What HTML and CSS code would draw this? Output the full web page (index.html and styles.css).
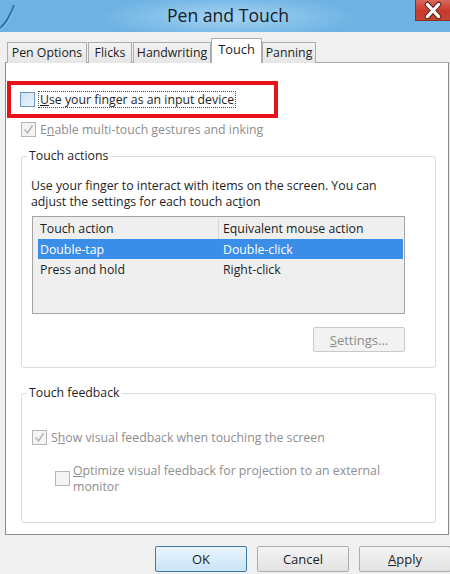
FILE: index.html
```html
<!DOCTYPE html>
<html>
<head>
<meta charset="utf-8">
<link rel="stylesheet" href="styles.css">
</head>
<body>
<div class="window">
  <div class="titlebar">
    <svg class="app-icon" width="30" height="32" viewBox="0 0 30 32"><path d="M0 28 C5 24 10 16 14 5" stroke="#2e6a97" stroke-width="1.6" fill="none"/><path d="M1 30 C6 26 10 20 13 12" stroke="#8cc1e6" stroke-width="1" fill="none"/></svg>
    <div class="title">Pen and Touch</div>
    <div class="close"><svg width="36" height="21" viewBox="0 0 36 21"><path d="M12 4 L24 17 M24 4 L12 17" stroke="#5a1a14" stroke-width="5.5" stroke-linecap="round"/><path d="M12 4 L24 17 M24 4 L12 17" stroke="#ffffff" stroke-width="3.4" stroke-linecap="round"/></svg></div>
  </div>

  <div class="tabs">
    <div class="tab t-pen">Pen Options</div>
    <div class="tab t-flicks">Flicks</div>
    <div class="tab t-hand">Handwriting</div>
    <div class="tab active">Touch</div>
    <div class="tab t-pan">Panning</div>
  </div>

  <div class="panel">
    <div class="highlight">
      <div class="check-row">
        <span class="box focus-box"></span>
        <span class="label focused"><u>U</u>se your finger as an input device</span>
      </div>
    </div>
    <div class="check-row row-enable disabled">
      <span class="box checked"><svg width="13" height="13" viewBox="0 0 13 13"><path d="M2.5 6.5 L5.5 10 L10.5 2.5" stroke="#b5b5b5" stroke-width="1.6" fill="none"/></svg></span>
      <span class="label">E<u>n</u>able multi-touch gestures and inking</span>
    </div>

    <fieldset class="group group-actions">
      <legend>Touch actions</legend>
      <p class="intro">Use your finger to interact with items on the screen. You can<br>adjust the settings for each touch ac<u>t</u>ion</p>
      <div class="list">
        <div class="list-row header"><span class="c1">Touch action</span><span class="c2">Equivalent mouse action</span></div>
        <div class="list-row selected"><span class="c1">Double-tap</span><span class="c2">Double-click</span></div>
        <div class="list-row"><span class="c1">Press and hold</span><span class="c2">Right-click</span></div>
      </div>
      <div class="settings-wrap"><div class="btn btn-disabled"><u>S</u>ettings...</div></div>
    </fieldset>

    <fieldset class="group group-feedback">
      <legend>Touch feedback</legend>
      <div class="check-row disabled row-show">
        <span class="box checked"><svg width="13" height="13" viewBox="0 0 13 13"><path d="M2.5 6.5 L5.5 10 L10.5 2.5" stroke="#b5b5b5" stroke-width="1.6" fill="none"/></svg></span>
        <span class="label">S<u>h</u>ow visual feedback when touching the screen</span>
      </div>
      <div class="check-row disabled row-opt">
        <span class="box"></span>
        <span class="label"><u>O</u>ptimize visual feedback for projection to an external<br>monitor</span>
      </div>
    </fieldset>
  </div>

  <div class="buttons">
    <div class="btn btn-default">OK</div>
    <div class="btn">Cancel</div>
    <div class="btn"><u>A</u>pply</div>
  </div>
</div>
</body>
</html>
```

FILE: styles.css
```css
* { box-sizing: border-box; }
html, body { margin: 0; padding: 0; }
body {
  width: 450px;
  height: 574px;
  overflow: hidden;
  background: #f0f0f0;
  font-family: "Open Sans", "Noto Sans", sans-serif;
  font-size: 12.3px;
  color: #1e1e1e;
}
.window { width: 450px; height: 574px; }

.titlebar {
  height: 32px;
  display: grid;
  grid-template-columns: 1fr auto 1fr;
  align-items: center;
  background: radial-gradient(ellipse 130px 22px at 228px 17px, #a6d3f2 0%, #86c1ea 55%, #6db2e3 100%);
}
.app-icon { justify-self: start; }
.title {
  font-size: 17.6px;
  color: #15202a;
  padding-left: 6px;
  margin-top: -2px;
}
.close {
  justify-self: end;
  align-self: start;
  width: 35px;
  height: 21px;
  background: linear-gradient(#d96a5c, #c7392b 55%, #c24536);
  border-left: 1px solid #8f2d22;
  border-bottom: 1px solid #8f2d22;
  display: flex;
  align-items: center;
  justify-content: center;
}
.close svg { display: block; }

.tabs {
  display: flex;
  padding-left: 7px;
  padding-top: 7px;
  height: 31px;
  align-items: flex-end;
  position: relative;
  z-index: 1;
  margin-bottom: -1px;
}
.tab {
  height: 21px;
  margin-right: 1px;
  border: 1px solid #acacac;
  border-bottom: none;
  background: linear-gradient(#f2f2f2, #e6e6e6);
  line-height: 20px;
  white-space: nowrap;
  text-align: center;
}
.t-pen { width: 80px; }
.t-flicks { width: 44px; }
.t-hand { width: 78px; }
.t-pan { width: 54px; }
.tab.active {
  width: 51px;
  height: 25px;
  background: #ffffff;
  line-height: 21px;
  margin-left: -1px;
  margin-right: 0;
  font-size: 12.8px;
}

.panel {
  margin-left: 5px;
  margin-right: 1px;
  height: 473px;
  background: #ffffff;
  border: 1px solid #8c8c8c;
  border-top-color: #a9a9a9;
  padding: 18px 0 0 1px;
}

.highlight {
  width: 271px;
  height: 37px;
  border: 4px solid #e8131a;
  padding-left: 9px;
  display: flex;
  align-items: center;
}
.check-row {
  display: flex;
  align-items: center;
  gap: 4px;
  white-space: nowrap;
}
.box {
  width: 15px;
  height: 15px;
  border: 1px solid #b5b5b5;
  background: #f4f4f4;
  display: inline-flex;
  align-items: center;
  justify-content: center;
  flex: none;
}
.focus-box {
  border-color: #6f97c0;
  background: linear-gradient(135deg, #cfe3f5, #e9f3fc);
}
.label.focused {
  outline: 1px dotted #444;
  outline-offset: 0;
  padding: 0 1px;
  line-height: 15px;
}
.disabled .label { color: #8e8e8e; }
.row-enable { margin-left: 14px; margin-top: 3px; }

.group {
  margin: 0 0 0 14px;
  width: 415px;
  border: 1px solid #dcdcdc;
  border-radius: 3px;
  padding: 0;
  min-width: 0;
}
.group legend {
  padding: 0 2px 0 2px;
  margin-left: 5px;
  line-height: 16px;
  color: #1e1e1e;
}
.group-actions { margin-top: 10px; height: 220px; }
.group-feedback { margin-top: 17px; height: 138px; }

.intro {
  margin: 14px 0 0 9px;
  line-height: 16px;
}
.list {
  margin: 6px 0 0 10px;
  width: 373px;
  height: 98px;
  border: 1px solid #a3a3a3;
  background: #efefef;
  padding: 1px 0 0 5px;
}
.list-row {
  display: flex;
  height: 20px;
  align-items: center;
}
.list-row .c1 { width: 181px; padding-left: 2px; }
.list-row .c2 { padding-left: 4px; }
.list-row.header { height: 21px; }
.list-row.header .c1 { border-right: 1px solid #d8d8d8; height: 21px; line-height: 21px; }
.list-row.selected {
  background: #3a8ee8;
  color: #ffffff;
  height: 20px;
  margin-right: 1px;
}

.settings-wrap {
  display: flex;
  justify-content: flex-end;
  margin: 13px 30px 0 0;
}
.btn {
  width: 92px;
  height: 26px;
  border: 1px solid #acacac;
  border-radius: 2px;
  background: linear-gradient(#f4f4f4, #e2e2e2);
  display: flex;
  align-items: center;
  justify-content: center;
  font-size: 13px;
}
.btn-disabled {
  width: 92px;
  height: 25px;
  border-color: #c9c9c9;
  background: #f2f2f2;
  color: #8d8d8d;
}
.btn-default {
  border-color: #3d7bad;
  background: linear-gradient(#eaf5fd, #c9e4f7);
}

.row-show { margin: 28px 0 0 10px; }
.row-opt { margin: 17px 0 0 33px; align-items: center; gap: 3px; }
.row-opt .label { line-height: 15.5px; }

.buttons {
  display: flex;
  gap: 10px;
  padding: 11px 0 0 155px;
}
.buttons .btn { flex: none; }
```
